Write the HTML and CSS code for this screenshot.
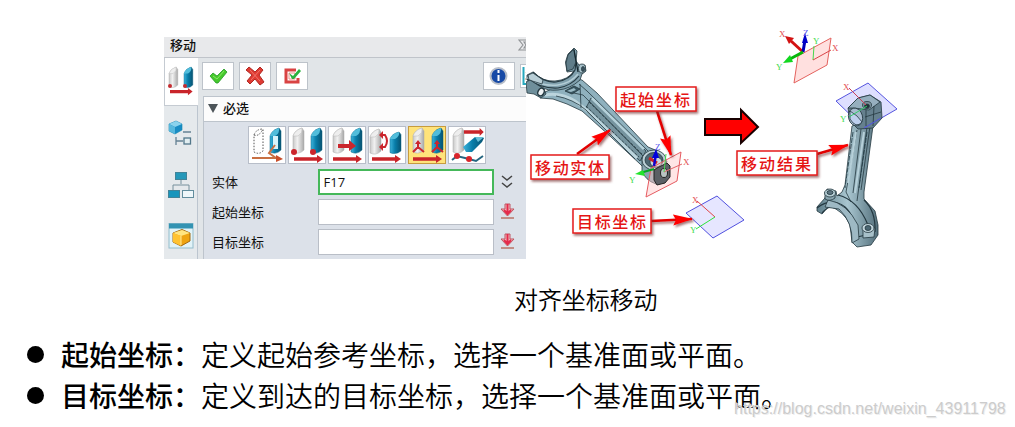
FILE: index.html
```html
<!DOCTYPE html>
<html lang="zh-CN">
<head>
<meta charset="utf-8">
<title>对齐坐标移动</title>
<link rel="stylesheet" href="styles.css">
</head>
<body>
<svg class="defs" width="0" height="0" aria-hidden="true">
  <defs>
    <linearGradient id="blue"><stop offset="0" stop-color="#3eb4dc"/><stop offset=".45" stop-color="#087da9"/><stop offset="1" stop-color="#075270"/></linearGradient>
    <linearGradient id="gray"><stop offset="0" stop-color="#c8c8c8"/><stop offset=".4" stop-color="#f1f1f1"/><stop offset="1" stop-color="#a9a9a9"/></linearGradient>
    <linearGradient id="steel"><stop offset="0" stop-color="#5f7f8b"/><stop offset=".5" stop-color="#a9c6d0"/><stop offset="1" stop-color="#536f7b"/></linearGradient>
    <g id="g-cyl"><path d="M0 8Q2 2 9 0L11 3V22Q6 27 0 24Z" fill="url(#gray)" stroke="#aaa" stroke-width=".5"/><path d="M0 8Q2 2 9 0Q10 5 5 8Z" fill="#eee" stroke="#bbb" stroke-width=".5"/></g>
    <g id="b-cyl"><path d="M0 8Q2 2 9 0L11 3V22Q6 27 0 24Z" fill="url(#blue)" stroke="#086183" stroke-width=".5"/><path d="M0 8Q2 2 9 0Q10 5 5 8Z" fill="#51bddb"/></g>
    <g id="arrow"><path d="M0 2.300H23V0L29 4L23 8V5.700H0Z" fill="#c9242a"/></g>
  </defs>
</svg>
<main class="page">
  <section class="figure">
    <div class="panel">
      <header class="titlebar"><span>移动</span><svg width="8" height="12" viewBox="0 0 8 12"><path d="M9 1H1L5 6L1 11H9M9 3H6L8 6L6 9H9" fill="none" stroke="#909396" stroke-width="1.1"/></svg></header>
      <div class="panel-main">
        <nav class="tabs">
          <div class="tab active"><svg width="32" height="44" viewBox="0 0 32 44"><use href="#g-cyl" transform="translate(4 9) scale(.8 .82)"/><use href="#b-cyl" transform="translate(19 9) scale(.8 .82)"/><circle cx="5" cy="28" r="2" fill="#c62c31"/><circle cx="20" cy="28" r="2" fill="#c62c31"/><use href="#arrow" transform="translate(5 30) scale(.78 .9)"/></svg></div>
          <svg class="tab-icon" width="32" height="56" viewBox="0 0 32 56"><path d="M5 18L12 15L18 18V24L11 28L5 25Z" fill="#188cc4" stroke="#1687af" stroke-width=".6"/><path d="M5 18L12 15L18 18L11 21Z" fill="#8bd3ed"/><path d="M5 18L11 21V28L5 25Z" fill="#57b8dd"/><path d="M19 26H27M12 31V39M12 35H19" stroke="#658294" stroke-width="1.300"/><rect x="20" y="32" width="6.500" height="6" fill="#e2eef1" stroke="#52778a" stroke-width="1.300"/></svg>
          <svg class="tab-icon" width="32" height="51" viewBox="0 0 32 51"><path d="M17 17V22M9 29V23H25V29" fill="none" stroke="#77909c"/><rect x="11.500" y="10.500" width="11" height="7" fill="#2598b9" stroke="#418398"/><rect x="4.500" y="28.500" width="11" height="7" fill="#1795bc" stroke="#418398"/><rect x="18.500" y="28.500" width="11" height="7" fill="#eff7fa" stroke="#628d9d"/></svg>
          <svg class="tab-icon" width="32" height="45" viewBox="0 0 32 45"><rect x="5" y="10.500" width="24" height="24.500" fill="#e1f3f8" stroke="#94bdcc"/><rect x="5" y="10.500" width="24" height="5" fill="#3393b2"/><path d="M9 20L18 16.500L26 20V28L17 33L9 29Z" fill="#eea411" stroke="#a46a13"/><path d="M9 20L18 17L26 20L17 23Z" fill="#ffe580"/><path d="M9 20L17 23V33L9 29Z" fill="#ffc331"/><path d="M17 23V32" stroke="#ffe899"/></svg>
        </nav>
        <div class="work">
          <div class="toolbar">
            <div class="tool"><svg width="20" height="20"><path d="M2 10L5 7L9 10L16 3L19 6L10 17H8Z" fill="#46c92c" stroke="#259927" stroke-width=".8"/><path d="M5 10L9 13L16 5" fill="none" stroke="#87ea64"/></svg></div>
            <div class="tool"><svg width="20" height="20"><path d="M1 4L4 1L10 6L15 1L18 4L14 9L19 16L15 19L10 13L5 18L2 15L7 9Z" fill="#e03b33" stroke="#af2923"/><path d="M5 4L15 15M15 4L6 14" stroke="#ee756b"/></svg></div>
            <div class="tool"><svg width="20" height="20"><path d="M14 4H4V16H16V12" fill="none" stroke="#d94343" stroke-width="3"/><path d="M7 7H13V13H7Z" fill="none" stroke="#ee8f89"/><path d="M7 7L11 10L17 3L19 5L12 13H10Z" fill="#29b33f"/></svg></div>
            <div class="tool info"><svg width="20" height="20"><circle cx="9.500" cy="10" r="8" fill="#174aa6" stroke="#b8bec8" stroke-width="2"/><path d="M9.500 4V7M9.500 9V15" stroke="#fff" stroke-width="2"/></svg></div>
            <div class="tool cut"><svg width="6" height="23"><path d="M2.500 2V19H6" fill="none" stroke="#27a8bd" stroke-width="2"/><path d="M5 7L6 9M4 14H6" stroke="#d99b62"/></svg></div>
          </div>
          <div class="section-title"><i></i><span>必选</span></div>
          <div class="form">
            <div class="modes">
              <div class="mode"><svg width="36" height="36"><path d="M5 8Q7 2 14 2V24Q10 28 5 25ZM5 8Q10 10 14 2" fill="none" stroke="#555" stroke-dasharray="1.500 1.500"/><use href="#b-cyl" transform="translate(21 1)"/><path d="M24 9H29V22H24Z" fill="#d6f3fb"/><path d="M3 31H27M27 31L20 26L26 18" fill="none" stroke="#c87043" stroke-width="2"/><path d="M27 28L34 32L27 35Z" fill="#c94e2a"/></svg></div>
              <div class="mode"><svg width="36" height="36"><use href="#g-cyl" x="4" y="1"/><use href="#b-cyl" x="22" y="1"/><circle cx="5" cy="25" r="3" fill="#cb262d"/><circle cx="24" cy="25" r="3" fill="#cb262d"/><use href="#arrow" x="5" y="28"/></svg></div>
              <div class="mode"><svg width="36" height="36"><use href="#g-cyl" x="4" y="1"/><use href="#b-cyl" x="22" y="1"/><path d="M9 17H20V13L27 19L20 24V21H9Z" fill="#cb262d"/><use href="#arrow" x="4" y="28"/></svg></div>
              <div class="mode"><svg width="36" height="36"><use href="#g-cyl" x="1" y="2"/><use href="#b-cyl" transform="translate(21 5) scale(1 .86)"/><path d="M12 8H16Q20 14 16 20H12" fill="none" stroke="#cb262d" stroke-width="2"/><path d="M14 4V12L10 8ZM14 16V24L10 20Z" fill="#cb262d"/><use href="#arrow" x="3" y="28"/></svg></div>
              <div class="mode selected"><svg width="36" height="36"><use href="#g-cyl" x="4" y="1"/><use href="#b-cyl" x="23" y="1"/><path d="M9 21V15M9 20L4 25M9 20L15 25M28 21V15M28 20L23 25M28 20L34 25" stroke="#cb262d" stroke-width="2"/><path d="M6 17L9 13L12 17ZM25 17L28 13L31 17Z" fill="#cb262d"/><use href="#arrow" x="4" y="28"/></svg></div>
              <div class="mode"><svg width="36" height="36"><use href="#g-cyl" x="4" y="1"/><path d="M14 20L26 10L35 11L33 15L23 25H17Z" fill="url(#blue)"/><path d="M26 10H35L29 15Z" fill="#66bfd8"/><use href="#arrow" transform="translate(15 1) scale(.68 1)"/><path d="M3 33L8 29L20 32L27 34L34 29" fill="none" stroke="#256681" stroke-width="2"/><circle cx="8" cy="29" r="3" fill="#d8252b"/><circle cx="20" cy="32" r="3" fill="#d8252b"/></svg></div>
            </div>
            <div class="field"><label>实体</label><div class="input focus">F17</div><svg width="16" height="20"><path d="M3 4L8 8L13 4M3 11L8 15L13 11" fill="none" stroke="#444" stroke-width="1.500"/></svg></div>
            <div class="field"><label>起始坐标</label><div class="input"></div><svg width="16" height="20"><path d="M6 2H11V7H15L8.500 14L2 7H6Z" fill="#f0b9bd" stroke="#bf5560"/><path d="M8.500 2V11M5 8L8.500 12L12 8" fill="none" stroke="#e52b4c" stroke-width="2"/><path d="M2 16H15" stroke="#b46353" stroke-width="1.300"/></svg></div>
            <div class="field"><label>目标坐标</label><div class="input"></div><svg width="16" height="20"><path d="M6 2H11V7H15L8.500 14L2 7H6Z" fill="#f0b9bd" stroke="#bf5560"/><path d="M8.500 2V11M5 8L8.500 12L12 8" fill="none" stroke="#e52b4c" stroke-width="2"/><path d="M2 16H15" stroke="#b46353" stroke-width="1.300"/></svg></div>
          </div>
        </div>
      </div>
    </div>
    <svg class="model" width="489" height="270" viewBox="526 0 489 270">
      <defs>
        <marker id="red-head" viewBox="0 0 20 12" refX="19" refY="6" markerWidth="20" markerHeight="12" markerUnits="userSpaceOnUse" orient="auto"><path d="M0 .5L20 6L0 11.500L3 6Z" fill="#f00"/></marker>
        <filter id="shadow" x="-10%" y="-20%" width="125%" height="160%"><feDropShadow dx="1.500" dy="2" stdDeviation="1.200" flood-color="#733" flood-opacity=".65"/></filter>
      </defs>
      <!-- Connecting rod before the move -->
      <g stroke="#243840" stroke-width=".8" stroke-linejoin="round">
        <path d="M545 92L556 87L576 79L582 80L597 93L648 147L660 152L661 165L645 169L640 164L611 137L582 111L567 104L553 99L540 98Z" fill="#8fb1be"/>
        <path d="M591 98L646 151L640 161L585 110Z" fill="#76949f"/>
        <path d="M592 98L644 149" stroke="#b5d1da" stroke-width="3"/>
        <path d="M545 95Q560 92 575 101L588 111L637 158" fill="none" stroke="#bcd5dd" stroke-width="3"/>
        <path d="M579 84L587 91L648 151M569 92L583 95L644 157M556 96Q573 99 586 110L635 159M580 84L581 108" fill="none"/>
        <path d="M589 102L642 154M586 106L639 157" stroke-dasharray="3 1.500"/>
        <path d="M565 91L574 86L580 89L572 94Z" fill="#385560"/><path d="M567 91L574 88L576 90L571 92Z" fill="#9abac5" stroke="none"/>
        <path d="M565.500 62L568 54L574 48L577 51L576 61L579 65L585 65L586 71L582 74L580 80Q570 89 558 90Q547 91 542 87L527 80V75L533 72Q543 82 555 81Q568 80 574 71L567 72Z" fill="#80a0ad"/>
        <path d="M527 78Q544 87 558 85Q571 83 578 74" fill="none" stroke="#b3cdd6" stroke-width="1.500"/>
        <path d="M533 72Q544 83 556 82Q570 80 575 70L576 62M527 79Q542 89 558 88Q571 86 579 76" fill="none" stroke-width="1.200"/>
        <path d="M566 63L568 55L574 49L576 62L573 69L567 71Z" fill="#607d89"/>
        <path d="M574 50L576 61L578 72" fill="none" stroke="#16282f" stroke-width="1.300"/>
        <ellipse cx="582" cy="68.500" rx="3.500" ry="4.500" fill="#a7c1ca"/><ellipse cx="583" cy="69" rx="1.500" ry="2.500" fill="#3b5360"/>
        <path d="M528 75L533 73L543 80L542 84L529 80Z" fill="#b8ced6"/>
        <path d="M526 82L530 80L544 89L546 94L541 98L534 94L527 93Z" fill="#6f8f9b"/>
        <ellipse cx="541" cy="92" rx="3" ry="4" fill="#eff3f5" stroke-width="1.500" transform="rotate(30 541 92)"/>
        <path d="M642 157V171Q645 180 656 184L662 179L667 161Z" fill="#8aa6b1"/>
        <ellipse cx="654" cy="160" rx="12" ry="10" fill="#bcd0d7"/><ellipse cx="654" cy="160" rx="9" ry="7.500" fill="#4e6773"/><ellipse cx="656" cy="162" rx="6" ry="5" fill="#c8d8de"/>
      </g>
      <path d="M681 152L677 181L646 197L651 168Z" fill="#ffc7c7" fill-opacity=".45" stroke="#e65b61"/>
      <path d="M657 168L667 163L670 166V177L665 183L657 185L654 180V170Z" fill="#5b6065" stroke="#222"/><ellipse cx="664" cy="173" rx="3.500" ry="4.500" fill="#b9c4c3" stroke="#222"/>
      <path d="M649 158L657 163" stroke="#cf2526" stroke-width="3"/><path d="M654 166L656 154" stroke="#10c" stroke-width="2.500"/><path d="M652 158L656 149L659 158Z" fill="#00d"/><path d="M654 169L640 173" stroke="#0a2" stroke-width="2"/><path d="M635 174L643 170L645 176Z" fill="#22e52c"/><path d="M664 172L682 164" stroke="#e5656a"/><path d="M664 172L666 154" stroke="#45d94c"/>
      <!-- Destination frame -->
      <path d="M686 213L717 196L744 220L713 238Z" fill="#e6e6ff" stroke="#5151df"/>
      <path d="M697 201L715 217" stroke="#e24444"/><path d="M715 217L696 229" stroke="#2de43a"/>
      <!-- Source and view axes -->
      <path d="M798 56L831 38L827 65L794 83Z" fill="#ffe0df" stroke="#e4625e"/><path d="M814 46L813 60" stroke="#45d94c"/><path d="M813 60L831 50" stroke="#d94448"/>
      <path d="M803 52L791 41" stroke="#d31212" stroke-width="3"/><path d="M785 36L794 38L789 44Z" fill="#d31212"/><path d="M803 52L805 40" stroke="#00b" stroke-width="3"/><path d="M802 43L805 33L808 43Z" fill="#00c"/><path d="M803 52L790 59" stroke="#08b70c" stroke-width="3"/><path d="M783 63L790 55L793 62Z" fill="#11d820"/>
      <!-- Moved connecting rod -->
      <path d="M836 101L868 83L897 109L864 128Z" fill="#dedfff" stroke="#5655df"/>
      <g stroke="#243840" stroke-width=".8" stroke-linejoin="round">
        <path d="M852 126L845 185L842 192L837 196L836 191L827 189L825 198L817 207V211L822 214L829 206Q844 211 850 225L852 242L857 247L871 245L878 235V225L875 211L864 199V192L873 126L869 120Z" fill="url(#steel)"/>
        <path d="M817 208Q831 197 845 207Q855 216 857 237L871 234M822 213Q833 200 846 213Q853 222 853 242M838 195Q858 200 868 225M864 200Q876 211 875 232" fill="none" stroke-width="1.200"/>
        <path d="M828 200Q847 203 858 225L859 239L852 243Q853 222 839 209L825 207Z" fill="#9eb9c4"/>
        <path d="M825 192V199Q830 202 835 198V192Z" fill="#89a5af"/><ellipse cx="830" cy="193" rx="5.500" ry="4" fill="#b6ced5"/><ellipse cx="830" cy="192.500" rx="3" ry="2" fill="#5d7580"/>
        <path d="M863 228V238L874 237L875 228Z" fill="#a7c0c9"/><ellipse cx="868" cy="228" rx="6" ry="4.500" fill="#bed2d9"/><ellipse cx="868" cy="228" rx="3" ry="2.500" fill="#4b6672"/>
        <path d="M857 130L846 192L851 202M861 129L853 193M867 127L857 201M870 126L861 190" fill="none"/><path d="M856 132L848 183M864 132L855 193" fill="none" stroke="#b6d0d9" stroke-width="2"/><path d="M867 132L859 188M853 132L845 188" fill="none" stroke="#1f3942" stroke-dasharray="5 1"/>
        <path d="M848 108L858 98L870 95L881 102L882 118L873 128L858 129L850 121Z" fill="#65808e"/><path d="M848 108L858 98L870 95L880 102L869 110L854 108Z" fill="#96afbf"/><ellipse cx="855.500" cy="117" rx="7" ry="9" fill="#a7bbcf" transform="rotate(-15 855.500 117)"/><path d="M850 111L857 116L862 122Q856 129 850 119Z" fill="#bed0ee"/><ellipse cx="867" cy="105" rx="4.500" ry="3.500" fill="#7b929d"/><ellipse cx="867" cy="106" rx="2.500" ry="2" fill="#203035"/><path d="M866 110V126M874 106L873 126M865 117L881 112" fill="none"/>
      </g>
      <path d="M849 88L866 105" stroke="#c83f57"/><path d="M867 106L849 117" stroke="#31cb67"/><path d="M864 128L881 118" stroke="#5150e8"/>
      <g class="axis"><text x="692" y="203" class="rx">X</text><text x="690" y="233" class="gy">Y</text><text x="683" y="165" class="rx">X</text><text x="629" y="183" class="gy">Y</text><text x="655" y="150" class="bz">Z</text><text x="779" y="37" class="rx">X</text><text x="803" y="36" class="bz">Z</text><text x="776" y="70" class="gy">Y</text><text x="813" y="44" class="gy">Y</text><text x="832" y="51" class="rx">X</text><text x="843" y="90" class="rx">X</text><text x="840" y="122" class="gy">Y</text></g>
      <path d="M705 119H741V110L758 127L741 143V135H705Z" fill="#f00" stroke="#180000" stroke-width="2"/>
      <g filter="url(#shadow)" stroke="#e20000" stroke-width="2.500"><path d="M577 154L610 130" marker-end="url(#red-head)"/><path d="M657 111L671 155" marker-end="url(#red-head)"/><path d="M651 221L692 219" marker-end="url(#red-head)"/><path d="M817 154L848 145" marker-end="url(#red-head)"/></g>
      <g class="callouts" filter="url(#shadow)"><rect x="616" y="87" width="80" height="24"/><rect x="531" y="155" width="78" height="24"/><rect x="573" y="209" width="78" height="24"/><rect x="737" y="151" width="80" height="24"/></g>
      <g class="callout-text"><text x="620" y="106" textLength="70">起始坐标</text><text x="535" y="174" textLength="69">移动实体</text><text x="577" y="228" textLength="69">目标坐标</text><text x="741" y="170" textLength="70">移动结果</text></g>
    </svg>
  </section>
  <p class="caption">对齐坐标移动</p>
  <ul class="definitions"><li><i></i><span><b>起始坐标：</b>定义起始参考坐标，选择一个基准面或平面。</span></li><li><i></i><span><b>目标坐标：</b>定义到达的目标坐标，选择一个基准面或平面。</span></li></ul>
  <div class="watermark">https://blog.csdn.net/weixin_43911798</div>
</main>
</body>
</html>
```
FILE: styles.css
```css
* { box-sizing: border-box; }
body { margin: 0; background: #fff; color: #111; font-family: "Noto Sans CJK SC", sans-serif; }
svg { display: block; flex-shrink: 0; }
.defs { position: absolute; }
.page { width: 1015px; height: 427px; position: relative; overflow: hidden; }
.figure { display: flex; height: 270px; padding-left: 164px; }
.panel { width: 362px; height: 222px; margin-top: 37px; background: #dce1e9; font-size: 13px; overflow: hidden; }
.titlebar { height: 21px; padding: 0 0 4px 6px; display: flex; align-items: center; justify-content: space-between; background: #e8e9eb; border-bottom: 1px solid #c0c4ca; font-weight: 500; line-height: 16px; }
.panel-main { display: flex; height: 201px; }
.tabs { width: 34px; background: #e5e9ec; border-right: 1px solid #bcc5cf; }
.tab { height: 48px; border: 1px solid #c5cbd2; border-top: 0; }
.tab.active { width: 35px; background: #fff; border-right: 0; }
.work { width: 328px; padding-left: 5px; background: #e1e5e8; }
.toolbar { height: 38px; padding-top: 4px; display: flex; gap: 5px; background: #e1e5e8; }
.tool { width: 32px; height: 28px; background: #fff; border: 1px solid #bdc3ca; display: flex; align-items: center; justify-content: center; margin-left: -1px; margin-right: 1px; }
.tool.info { margin-left: auto; margin-right: 1px; }
.tool.cut { width: 6px; height: 24px; margin-top: 2px; margin-right: 0; border-right: 0; flex-shrink: 0; }
.section-title { height: 26px; display: flex; align-items: center; gap: 5px; padding: 0 0 2px 4px; border: 1px solid #bdc4cc; border-right: 0; background: #fcfcfc; font-weight: 500; }
.section-title i { border: 5.5px solid transparent; border-top: 9px solid #4c5459; border-bottom: 0; }
.section-title span { line-height: 20px; }
.form { height: 137px; padding: 4px 11px 0 8px; background: #dce1e9; border-left: 1px solid #bdc4cc; }
.modes { display: flex; gap: 2px; padding-left: 36px; height: 41px; }
.mode { width: 38px; height: 38px; border: 1px solid #b8bec9; background: #fff; }
.mode.selected { background: #ffe37a; border-color: #c69b3e; }
.field { display: flex; align-items: center; height: 30px; }
.field label { width: 106px; line-height: 20px; }
.input { width: 177px; height: 26px; padding-left: 5px; border: 1px solid #b9bec7; background: #fff; line-height: 23px; font-family: "Open Sans", "Noto Sans", sans-serif; }
.input.focus { padding-left: 4px; border: 2px solid #45b85a; line-height: 22px; }
.field svg { margin-left: 5px; }
.callouts rect { fill: #fff; stroke: #e51b1b; stroke-width: 1.5px; }
.callout-text { font: 500 16px "Noto Sans CJK SC", sans-serif; fill: #e51414; }
.axis { font: 9px "Liberation Serif", serif; }
.rx { fill: #e24c50; }
.gy { fill: #45db50; }
.bz { fill: #5454ed; }
.caption { margin: 12px 0 0 514px; height: 34px; font-size: 24px; line-height: 34px; font-weight: 350; color: #000; letter-spacing: -.1px; }
.definitions { list-style: none; margin: 18px 0 0; padding: 0; color: #000; font-size: 28px; font-weight: 350; line-height: 41px; }
.definitions li { height: 41px; display: flex; align-items: center; padding-left: 27px; white-space: nowrap; }
.definitions i { width: 17px; height: 17px; border-radius: 50%; background: #000; margin-right: 17px; }
.definitions b { font-weight: 500; }
.watermark { position: absolute; left: 734px; top: 400px; font: 16px/18px "Liberation Sans", Arial, sans-serif; letter-spacing: .02px; color: #ccc; text-shadow: 1px 1px #eee; white-space: nowrap; }
```
